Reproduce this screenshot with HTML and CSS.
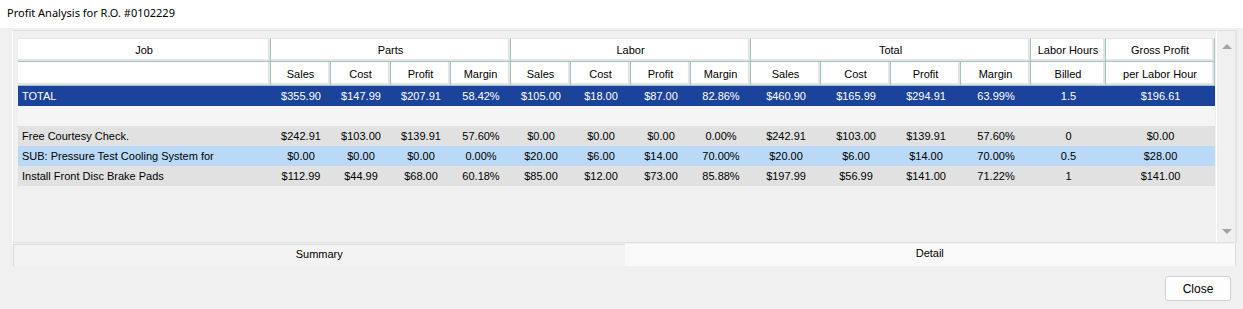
FILE: index.html
```html
<!DOCTYPE html>
<html>
<head>
  <title>Profit Analysis for R.O. #0102229</title>
  <link rel="stylesheet" href="styles.css">
</head>
<body>
  <div class="titlebar">Profit Analysis for R.O. #0102229</div>

  <div class="panel">
    <div class="grid-wrap">
      <table class="grid">
        <colgroup>
          <col class="c-job">
          <col class="c-60"><col class="c-60"><col class="c-60"><col class="c-60">
          <col class="c-60"><col class="c-60"><col class="c-60"><col class="c-60">
          <col class="c-70"><col class="c-70"><col class="c-70"><col class="c-70">
          <col class="c-hrs"><col class="c-gp">
        </colgroup>
        <thead>
          <tr>
            <th>Job</th>
            <th colspan="4">Parts</th>
            <th colspan="4">Labor</th>
            <th colspan="4">Total</th>
            <th>Labor Hours</th>
            <th>Gross Profit</th>
          </tr>
          <tr>
            <th></th>
            <th>Sales</th><th>Cost</th><th>Profit</th><th>Margin</th>
            <th>Sales</th><th>Cost</th><th>Profit</th><th>Margin</th>
            <th>Sales</th><th>Cost</th><th>Profit</th><th>Margin</th>
            <th>Billed</th>
            <th>per Labor Hour</th>
          </tr>
        </thead>
        <tbody>
          <tr class="row-total">
            <td class="job">TOTAL</td>
            <td>$355.90</td><td>$147.99</td><td>$207.91</td><td>58.42%</td>
            <td>$105.00</td><td>$18.00</td><td>$87.00</td><td>82.86%</td>
            <td>$460.90</td><td>$165.99</td><td>$294.91</td><td>63.99%</td>
            <td>1.5</td><td>$196.61</td>
          </tr>
          <tr class="row-blank">
            <td colspan="15"></td>
          </tr>
          <tr class="row-job">
            <td class="job">Free Courtesy Check.</td>
            <td>$242.91</td><td>$103.00</td><td>$139.91</td><td>57.60%</td>
            <td>$0.00</td><td>$0.00</td><td>$0.00</td><td>0.00%</td>
            <td>$242.91</td><td>$103.00</td><td>$139.91</td><td>57.60%</td>
            <td>0</td><td>$0.00</td>
          </tr>
          <tr class="row-sub">
            <td class="job">SUB: Pressure Test Cooling System for</td>
            <td>$0.00</td><td>$0.00</td><td>$0.00</td><td>0.00%</td>
            <td>$20.00</td><td>$6.00</td><td>$14.00</td><td>70.00%</td>
            <td>$20.00</td><td>$6.00</td><td>$14.00</td><td>70.00%</td>
            <td>0.5</td><td>$28.00</td>
          </tr>
          <tr class="row-job">
            <td class="job">Install Front Disc Brake Pads</td>
            <td>$112.99</td><td>$44.99</td><td>$68.00</td><td>60.18%</td>
            <td>$85.00</td><td>$12.00</td><td>$73.00</td><td>85.88%</td>
            <td>$197.99</td><td>$56.99</td><td>$141.00</td><td>71.22%</td>
            <td>1</td><td>$141.00</td>
          </tr>
        </tbody>
      </table>
    </div>
    <div class="scrollbar">
      <span class="arrow-up"></span>
      <span class="arrow-down"></span>
    </div>
  </div>

  <div class="tabs">
    <div class="tab tab-summary">Summary</div>
    <div class="tab tab-detail">Detail</div>
  </div>

  <div class="footer">
    <button class="btn-close">Close</button>
  </div>
</body>
</html>
```

FILE: styles.css
```css
/* Profit analysis dialog */
body {
  margin: 0;
  background-color: #f0f0f0;
  font-family: "Liberation Sans", Arial, sans-serif;
  font-size: 11px;
  color: #000;
  width: 1243px;
  height: 309px;
  overflow: hidden;
}

.titlebar {
  height: 28px;
  line-height: 26px;
  padding-left: 7px;
  background-color: #fff;
  font-family: "Noto Sans", "Open Sans", sans-serif;
  font-size: 11px;
}

.panel {
  display: flex;
  margin: 2px 0 0 12px;
  width: 1223px;
  height: 211px;
  border: 1px solid #e2e2e2;
  border-left-color: #fff;
}

.grid-wrap {
  padding: 7px 0 0 5px;
}

.grid {
  border-collapse: separate;
  border-spacing: 0;
  table-layout: fixed;
  width: 1197px;
}

.c-job { width: 253px; }
.c-60 { width: 60px; }
.c-70 { width: 70px; }
.c-hrs { width: 75px; }
.c-gp { width: 109px; }

.grid th {
  height: 23px;
  padding: 0;
  font-weight: normal;
  text-align: center;
  background-color: #fff;
  border-right: 1px solid #a3c3c3;
  border-bottom: 1px solid #a3c3c3;
  box-shadow: inset -2px -2px 0 #e4e4e4;
}

.grid thead tr:first-child th {
  border-top: 1px solid #e6e6e6;
  height: 22px;
}

.grid td {
  height: 20px;
  padding: 0;
  text-align: center;
  white-space: nowrap;
  overflow: hidden;
}

.grid td.job {
  text-align: left;
  padding-left: 4px;
}

.row-total td {
  background-color: #1c439b;
  color: #fff;
}

.row-blank td {
  background-color: #f5f5f5;
}

.row-job td {
  background-color: #e1e1e1;
}

.row-sub td {
  background-color: #b9d9f6;
}

.scrollbar {
  position: relative;
  margin-left: 1px;
  width: 19px;
  border-left: 1px solid #fff;
  border-right: 1px solid #e6e6e6;
}

.arrow-up,
.arrow-down {
  position: absolute;
  left: 5px;
  width: 0;
  height: 0;
  border-left: 5px solid transparent;
  border-right: 5px solid transparent;
}

.arrow-up {
  top: 13px;
  border-bottom: 5px solid #a3a3a3;
}

.arrow-down {
  bottom: 8px;
  border-top: 5px solid #a3a3a3;
}

.tabs {
  display: flex;
  margin: 1px 0 0 13px;
  width: 1223px;
  height: 22px;
}

.tab {
  flex: 1;
  line-height: 19px;
  text-align: center;
  font-size: 11px;
  color: #000;
}

.tab-summary {
  background-color: #f3f3f3;
  border-top: 1px solid #dcdcdc;
  border-left: 1px solid #dcdcdc;
}

.tab-detail {
  background-color: #f9f9f9;
  border-right: 1px solid #dcdcdc;
}

.footer {
  display: flex;
  justify-content: flex-end;
  padding: 10px 12px 0 0;
}

.btn-close {
  width: 66px;
  height: 25px;
  background-color: #fdfdfd;
  border: 1px solid #d0d0d0;
  border-radius: 3px;
  font-family: "Liberation Sans", Arial, sans-serif;
  font-size: 12px;
  color: #000;
}
```
